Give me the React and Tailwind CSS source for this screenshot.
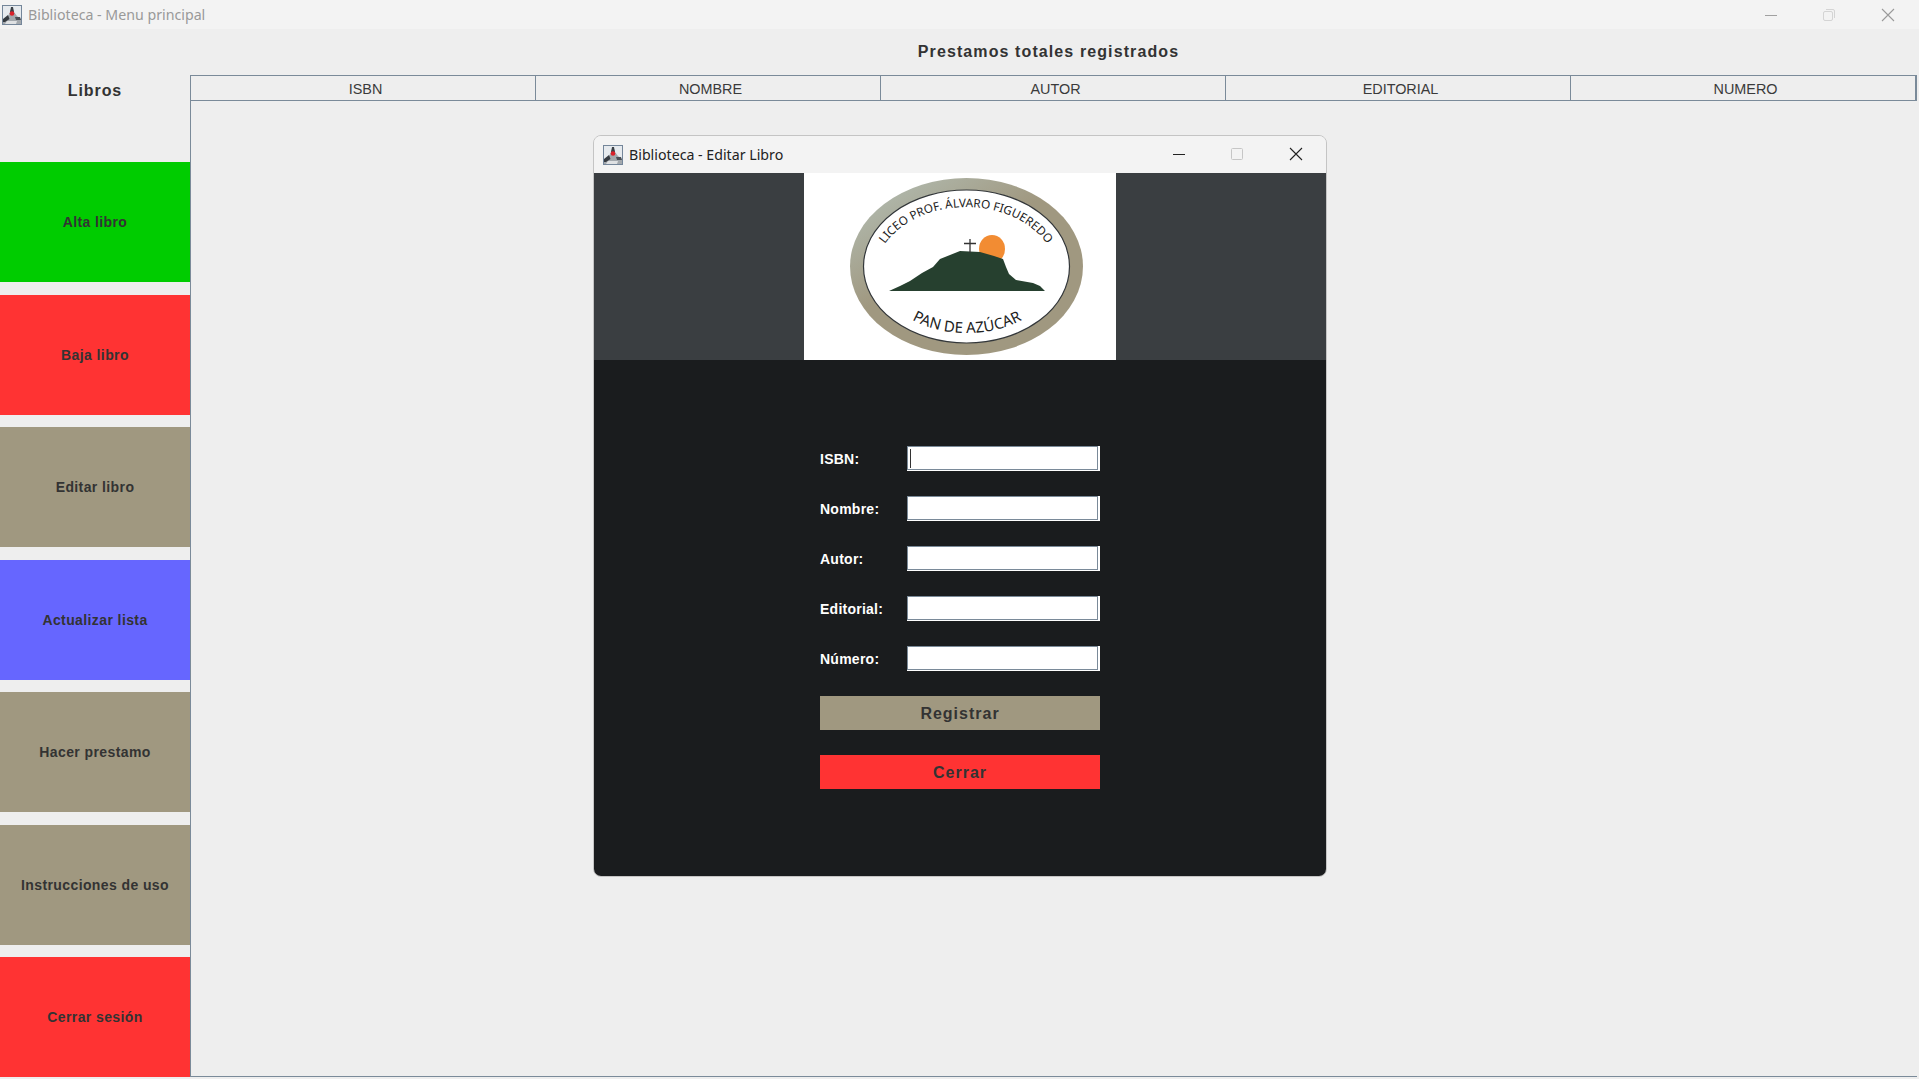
import React from "react";

const sideButtons = [
  { label: "Alta libro", color: "bg-[#00cc00]" },
  { label: "Baja libro", color: "bg-[#ff3333]" },
  { label: "Editar libro", color: "bg-[#a09880]" },
  { label: "Actualizar lista", color: "bg-[#6666ff]" },
  { label: "Hacer prestamo", color: "bg-[#a09880]" },
  { label: "Instrucciones de uso", color: "bg-[#a09880]" },
  { label: "Cerrar sesión", color: "bg-[#ff3333]" },
];

const columns = ["ISBN", "NOMBRE", "AUTOR", "EDITORIAL", "NUMERO"];
const fields = ["ISBN:", "Nombre:", "Autor:", "Editorial:", "Número:"];

// small app icon used on both title bars
function AppIcon() {
  return (
    <svg width="20" height="20" viewBox="0 0 20 20" className="shrink-0">
      <rect x="0.5" y="0.5" width="19" height="19" fill="#e6eaee" stroke="#74869a" />
      <path d="M1 15 L6 11 L8 7 L10 2 L12 7 L15 11 L19 14 L19 19 L1 19 Z" fill="#a3a8ad" />
      <path d="M1 14 L6 10 L7.500 14 L3 17 L1 17 Z" fill="#353a40" />
      <path d="M13 12 L18 12 L19 15 L14 15 Z" fill="#4a5057" />
      <path d="M5 16 L15 16 L14 19 L3 19 Z" fill="#dfe1e3" />
      <path d="M9 2 L11 2 L12 7 L8 7 Z" fill="#3a3f45" />
      <circle cx="10" cy="8.500" r="2.300" fill="#d9202a" />
    </svg>
  );
}

function Logo() {
  return (
    <svg width="312" height="187" viewBox="0 0 312 187" className="block bg-white">
      <defs>
        <linearGradient id="ring" x1="0.1" y1="0.1" x2="0.6" y2="0.7">
          <stop offset="0" stopColor="#b0b8ac" />
          <stop offset="0.6" stopColor="#a09880" />
          <stop offset="1" stopColor="#a09880" />
        </linearGradient>
        <path id="topArc" d="M 70 104 A 92 70 0 0 1 254 104" />
        <path id="bottomArc" d="M 78 104 A 85 56 0 0 0 248 104" />
      </defs>
      <ellipse cx="162.500" cy="93.500" rx="116.500" ry="88.500" fill="url(#ring)" />
      <ellipse cx="162.500" cy="93.500" rx="103" ry="76.500" fill="#fff" stroke="#33373a" strokeWidth="1.200" />
      <ellipse cx="188" cy="76" rx="13" ry="14" fill="#f28c33" />
      <path d="M85 118 L96 113 L106 108 L118 100 L129 94 L136 86 L146 82 L156 78 L176 79 L190 83 L199 86 L202 94 L205 101 L212 107 L229 110 L236 113 L241 118 Z" fill="#26402f" />
      <path d="M166 66 V80 M160 70.500 H172" stroke="#333" strokeWidth="1.300" fill="none" />
      <text fontFamily="Noto Sans, sans-serif" fontSize="11.800" fill="#222">
        <textPath href="#topArc" startOffset="50%" textAnchor="middle">LICEO PROF. ÁLVARO FIGUEREDO</textPath>
      </text>
      <text fontFamily="Noto Sans, sans-serif" fontSize="15" fill="#222">
        <textPath href="#bottomArc" startOffset="50%" textAnchor="middle">PAN DE AZÚCAR</textPath>
      </text>
    </svg>
  );
}

function Field({ label, focused }) {
  return (
    <div className="flex h-[25px] items-center">
      <span className="w-[87px] pt-[2px] text-[14px] font-bold tracking-[0.25px] text-white">{label}</span>
      <div className="h-[25px] w-[193px] bg-white pr-[2px] pb-[1px]">
        <div className="h-full w-full border border-[#7a8a99] pl-[2px] pt-[2px]">
          {focused && <div className="h-[19px] w-[1px] bg-[#333]" />}
        </div>
      </div>
    </div>
  );
}

function EditDialog() {
  return (
    <div className="absolute left-[593px] top-[135px] flex h-[742px] w-[734px] flex-col overflow-hidden rounded-lg border border-[#c4c4c4]">
      <div className="flex h-[37px] shrink-0 items-center bg-[#f3f3f3] pl-[9px]">
        <AppIcon />
        <span className="ml-[6px] font-['Noto_Sans',sans-serif] text-[14.2px] text-[#222]">Biblioteca - Editar Libro</span>
        <div className="ml-auto mb-[2px] flex items-center">
          <svg width="14" height="14" viewBox="0 0 14 14" className="mr-[44px]">
            <path d="M1 7.500 H13" stroke="#222" strokeWidth="1" />
          </svg>
          <svg width="14" height="14" viewBox="0 0 14 14" className="mr-[45px]">
            <rect x="1.500" y="1.500" width="11" height="11" rx="1" fill="none" stroke="#c6c6c6" />
          </svg>
          <svg width="14" height="14" viewBox="0 0 14 14" className="mr-[23px]">
            <path d="M1 1 L13 13 M13 1 L1 13" stroke="#222" strokeWidth="1.100" />
          </svg>
        </div>
      </div>
      <div className="flex h-[187px] shrink-0 justify-center bg-[#3a3e41]">
        <Logo />
      </div>
      <div className="flex flex-1 justify-center bg-[#1a1c1e] pt-[86px]">
        <div className="flex w-[280px] flex-col gap-[25px]">
          {fields.map((f, i) => (
            <Field key={f} label={f} focused={i === 0} />
          ))}
          <div className="flex h-[34px] items-center justify-center bg-[#a09880] pt-[2px] text-[16px] font-bold tracking-[1px] text-[#333]">
            Registrar
          </div>
          <div className="flex h-[34px] items-center justify-center bg-[#ff3333] pt-[2px] text-[16px] font-bold tracking-[1px] text-[#333]">
            Cerrar
          </div>
        </div>
      </div>
    </div>
  );
}

export default function App() {
  return (
    <div className="relative flex h-[1079px] w-[1919px] flex-col overflow-hidden bg-[#eeeeee] font-['Liberation_Sans',Arial,sans-serif] text-[#333]">
      {/* main window title bar */}
      <div className="flex h-[29px] shrink-0 items-center bg-[#f3f3f3] pl-[2px]">
        <AppIcon />
        <span className="ml-[6px] font-['Noto_Sans',sans-serif] text-[14.2px] text-[#999]">Biblioteca - Menu principal</span>
        <div className="ml-auto flex items-center">
          <svg width="14" height="14" viewBox="0 0 14 14" className="mr-[44px]">
            <path d="M1 7.500 H13" stroke="#a0a0a0" strokeWidth="1" />
          </svg>
          <svg width="14" height="14" viewBox="0 0 14 14" className="mr-[45px]">
            <rect x="1.500" y="3.500" width="9" height="9" rx="1.500" fill="none" stroke="#d4d4d4" />
            <path d="M4 1.500 H11 Q12.500 1.500 12.500 3 V10" fill="none" stroke="#d4d4d4" />
          </svg>
          <svg width="14" height="14" viewBox="0 0 14 14" className="mr-[24px]">
            <path d="M1 1 L13 13 M13 1 L1 13" stroke="#9a9a9a" strokeWidth="1.100" />
          </svg>
        </div>
      </div>

      <div className="flex flex-1">
        {/* sidebar */}
        <div className="flex h-[1048px] w-[190px] shrink-0 flex-col">
          <div className="flex h-[133px] shrink-0 justify-center pt-[52px] text-[16px] font-bold leading-5 tracking-[0.9px]">
            Libros
          </div>
          <div className="flex h-[915px] flex-col justify-between">
            {sideButtons.map((b) => (
              <div key={b.label} className={`flex h-[120px] items-center justify-center pt-[1px] text-[14px] font-bold tracking-[0.4px] ${b.color}`}>
                {b.label}
              </div>
            ))}
          </div>
        </div>

        {/* table area */}
        <div className="flex flex-1 flex-col">
          <div className="flex h-[46px] shrink-0 items-start justify-center pt-[13px] pr-[12px] text-[16px] font-bold leading-5 tracking-[1.1px]">
            Prestamos totales registrados
          </div>
          <div className="mr-[2px] flex h-[1002px] flex-col border-b border-l border-[#7a8a99]">
            <div className="flex h-[26px] shrink-0 border-y border-r-2 border-[#7a8a99]">
              {columns.map((c, i) => (
                <div key={c} className={`flex flex-1 items-center justify-center pl-[5px] pt-[4px] text-[14.4px] text-[#3a3a3a] ${i < 4 ? "border-r border-[#7a8a99]" : ""}`}>
                  {c}
                </div>
              ))}
            </div>
          </div>
        </div>
      </div>

      <EditDialog />
    </div>
  );
}
